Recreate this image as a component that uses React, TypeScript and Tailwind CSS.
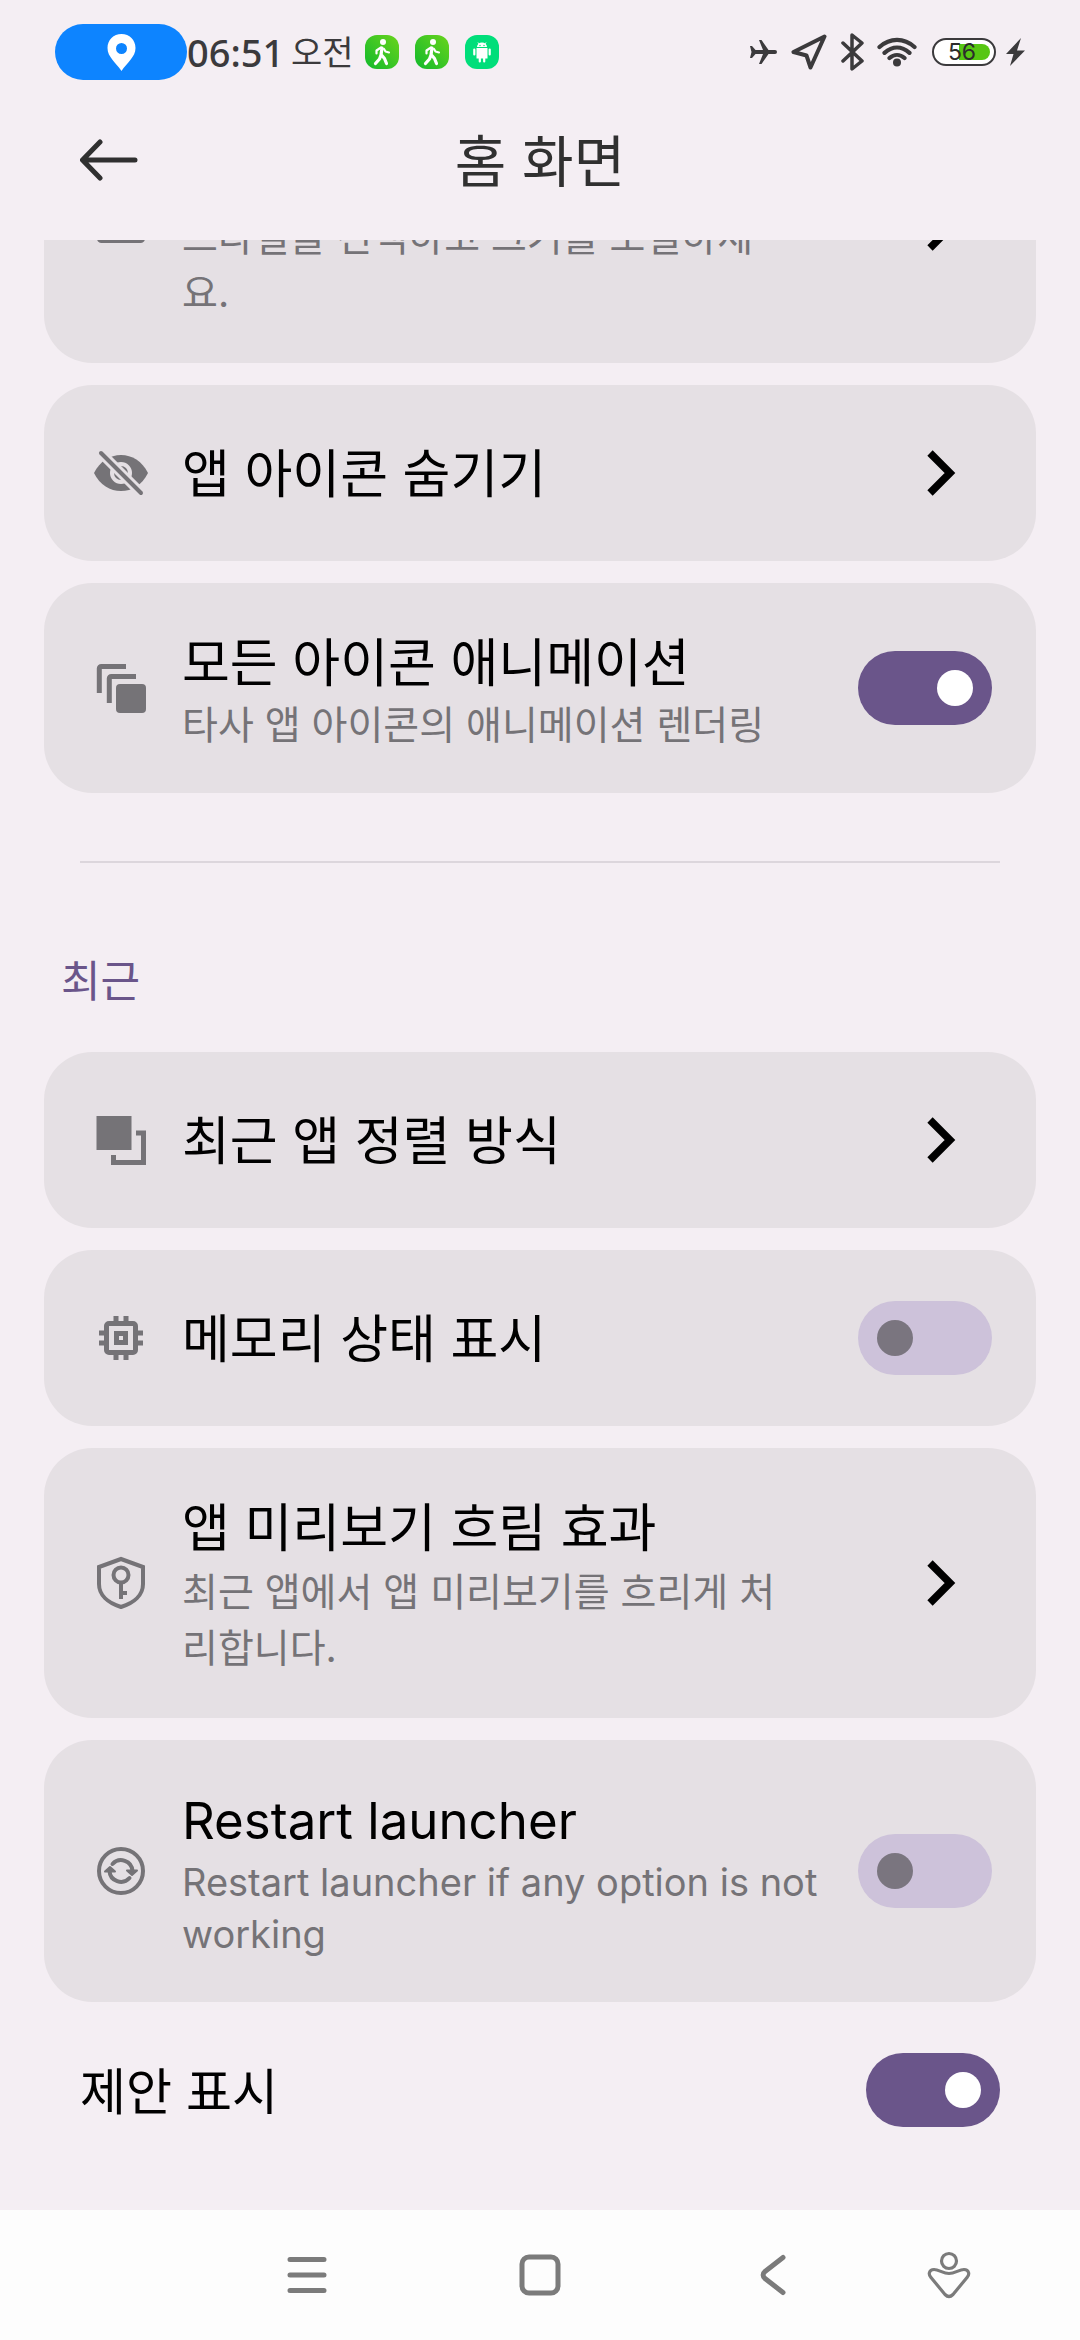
import { useId, useState } from "react";
import type { ReactNode } from "react";

const GRAY = "#757377";

function IconBox({ size, children }: { size: number; children: ReactNode }) {
  return (
    <svg width={size} height={size} viewBox="0 0 56 56" aria-hidden="true">
      {children}
    </svg>
  );
}

function GridIcon() {
  return (
    <IconBox size={56}>
      <rect x="6.5" y="15.5" width="43" height="25" rx="2" fill="none" stroke={GRAY} strokeWidth="5" />
    </IconBox>
  );
}

function EyeOffIcon() {
  return (
    <IconBox size={56}>
      <path d="M1 28C7 16 17 10 28 10s21 6 27 18c-6 12-16 18-27 18S7 40 1 28z" fill={GRAY} />
      <circle cx="28" cy="28" r="9" fill={GRAY} stroke="#e5e0e4" strokeWidth="4" />
      <path d="M4 4l48 48" stroke="#e5e0e4" strokeWidth="10" />
      <path d="M8 8l40 40" stroke={GRAY} strokeWidth="4" strokeLinecap="round" />
    </IconBox>
  );
}

function LayersIcon() {
  return (
    <IconBox size={56}>
      <path d="M6.300 33V8.500a2 2 0 0 1 2-2H33M16.300 43V18.500a2 2 0 0 1 2-2H43" fill="none" stroke={GRAY} strokeWidth="5" />
      <rect x="23" y="24" width="30" height="29" rx="4" fill={GRAY} />
    </IconBox>
  );
}

function RecentsIcon() {
  return (
    <IconBox size={56}>
      <path d="M3.500 4h35v34h-35z" fill={GRAY} />
      <path d="M43 21h7.500v29.500h-30V43" fill="none" stroke={GRAY} strokeWidth="5" />
    </IconBox>
  );
}

function ChipIcon() {
  return (
    <IconBox size={56}>
      <rect x="13.500" y="13.500" width="29" height="29" rx="2.500" fill="none" stroke={GRAY} strokeWidth="5" />
      <path d="M21 21h14v14H21zM26 26v4h4v-4z" fill={GRAY} fillRule="evenodd" />
      <path d="M23 6v6M33 6v6M23 44v6M33 44v6M6 23h6M6 33h6M44 23h6M44 33h6" stroke={GRAY} strokeWidth="5" />
    </IconBox>
  );
}

function ShieldIcon() {
  return (
    <IconBox size={56}>
      <path d="M28 4l22 8v17c0 11-9 19-22 23C15 48 6 40 6 29V12z" fill="none" stroke={GRAY} strokeWidth="4" />
      <circle cx="28" cy="20" r="7.500" fill="none" stroke={GRAY} strokeWidth="4" />
      <path d="M28 27v17M28 38h6" fill="none" stroke={GRAY} strokeWidth="4" />
    </IconBox>
  );
}

function RestartIcon() {
  return (
    <IconBox size={56}>
      <circle cx="28" cy="28" r="22" fill="none" stroke={GRAY} strokeWidth="4" />
      <path d="M19.500 21a11.500 11.500 0 0 1 20 7M36.500 35a11.500 11.500 0 0 1-20-7" fill="none" stroke={GRAY} strokeWidth="4" strokeLinecap="round" />
      <path d="M34 27.500h10l-5 4.500zM12 28.500h10l-5-4.500z" fill={GRAY} stroke={GRAY} strokeWidth="2" strokeLinejoin="round" />
    </IconBox>
  );
}

function Chevron() {
  return (
    <svg width="29" height="46" viewBox="0 0 29 46" className="mr-9" aria-hidden="true">
      <path d="M3 3l20 20L3 43" fill="none" stroke="#000" strokeWidth="7.500" />
    </svg>
  );
}

function Toggle({ id, initial }: { id: string; initial: boolean }) {
  const [on, setOn] = useState(initial);
  return (
    <span className="relative flex h-[74px] w-[134px] shrink-0">
      <input
        id={id}
        type="checkbox"
        role="switch"
        checked={on}
        onChange={() => setOn(!on)}
        className="peer h-full w-full appearance-none rounded-full bg-[#cdc2da] checked:bg-[#6a558a]"
      />
      <span className="pointer-events-none absolute top-[19px] left-[19px] size-9 rounded-full bg-[#7a757f] peer-checked:left-[79px] peer-checked:bg-white" />
    </span>
  );
}

type RowProps = {
  icon: ReactNode;
  title: string;
  text?: string;
  variant?: "compact" | "tall" | "latin";
};

const titleClass = {
  compact: "block text-[52px] leading-[70px] text-black",
  tall: "block text-[52px] leading-[70px] text-black",
  latin: "block text-[51px] leading-[70px] text-black",
};

const textClass = {
  compact: "block text-[39px] leading-[52px] text-[#757377]",
  tall: "block text-[39px] leading-[56px] text-[#757377]",
  latin: "block text-[38px] leading-[52px] text-[#757377]",
};

function RowBody({ icon, title, text, variant = "compact" }: RowProps) {
  return (
    <>
      <span className="flex w-[66px] shrink-0 justify-center">{icon}</span>
      <span className="ml-7 min-w-0 flex-1 pt-1 text-left">
        <span className={titleClass[variant]}>{title}</span>
        {text && <span className={textClass[variant]}>{text}</span>}
      </span>
    </>
  );
}

const card = "flex min-h-[176px] w-full items-center rounded-[48px] bg-[#e5e0e4] px-11 py-[42px]";

function LinkCard(props: RowProps) {
  return (
    <button type="button" className={card}>
      <RowBody {...props} />
      <span className="flex w-[204px] shrink-0 justify-end">
        <Chevron />
      </span>
    </button>
  );
}

function SwitchCard({ on, ...props }: RowProps & { on: boolean }) {
  const id = useId();
  return (
    <label htmlFor={id} className={card}>
      <RowBody {...props} />
      <Toggle id={id} initial={on} />
    </label>
  );
}

function WalkIcon() {
  const id = useId();
  return (
    <svg width="34" height="34" viewBox="0 0 34 34" aria-hidden="true">
      <defs>
        <linearGradient id={id} x1="0" y1="1" x2="1" y2="0">
          <stop offset="0" stopColor="#10b92c" />
          <stop offset="1" stopColor="#6ad41c" />
        </linearGradient>
      </defs>
      <rect width="34" height="34" rx="12" fill={`url(#${id})`} />
      <circle cx="18" cy="7" r="3" fill="#fff" />
      <path d="M16 12.500l-4.500 3v3" fill="none" stroke="#fff" strokeWidth="2.200" strokeLinecap="round" strokeLinejoin="round" />
      <path d="M19 14l1.500 2.500 3.500 1" fill="none" stroke="#fff" strokeWidth="2.200" strokeLinecap="round" strokeLinejoin="round" />
      <path d="M17 13l-1 7-1.500 4-4 4.500M16.500 20l3 3.500 2 5" fill="none" stroke="#fff" strokeWidth="3.200" strokeLinecap="round" strokeLinejoin="round" />
    </svg>
  );
}

function AndroidIcon() {
  return (
    <svg width="34" height="34" viewBox="0 0 34 34" aria-hidden="true">
      <rect width="34" height="34" rx="12" fill="#00de7a" />
      <path d="M12 12a5 4.500 0 0 1 10 0zM11.500 13h11v10.500h-11z" fill="#fff" />
      <path d="M9.300 14.500v5M24.700 14.500v5M14.800 23v3.500M19.200 23v3.500" stroke="#fff" strokeWidth="2.200" strokeLinecap="round" />
      <path d="M13 7.500l1.500 2M21 7.500l-1.500 2" stroke="#fff" strokeWidth="1" />
      <circle cx="15" cy="10.500" r="0.700" fill="#00de7a" />
      <circle cx="19" cy="10.500" r="0.700" fill="#00de7a" />
    </svg>
  );
}

function StatusBar() {
  return (
    <div className="flex h-[104px] shrink-0 items-center px-[55px] text-[#3b3a3c]">
      <span className="flex h-14 w-[132px] items-center justify-center rounded-full bg-[#0d84ff]">
        <svg width="29" height="37" viewBox="0 0 29 37" aria-hidden="true">
          <path d="M14.500 0C6.500 0 0.500 6 0.500 14c0 9 8 14 14 23 6-9 14-14 14-23 0-8-6-14-14-14zm0 9a5.500 5.500 0 1 1 0 11 5.500 5.500 0 0 1 0-11z" fill="#fff" fillRule="evenodd" />
        </svg>
      </span>
      <span className="w-[104px] font-['Noto_Sans',sans-serif] text-[38px] font-medium">06:51</span>
      <span className="w-[64px] text-[34px] whitespace-nowrap">오전</span>
      <span className="ml-[10px] flex items-center gap-4">
        <WalkIcon />
        <WalkIcon />
        <AndroidIcon />
      </span>
      <span className="ml-auto flex items-center">
        <svg width="27" height="26" viewBox="0 0 27 26" aria-hidden="true">
          <path d="M0 7h2l3.500 4h7.500L9 1h2.500l7 10H25a2 2 0 0 1 0 4h-6.500l-7 10H9l4-10H5.500L2 19H0l1.500-6z" fill="currentColor" />
        </svg>
        <svg width="36" height="36" viewBox="0 0 36 36" className="ml-[14px]" aria-hidden="true">
          <path d="M33.500 2.500L2.500 18l13 3.500L19.500 33.500z" fill="none" stroke="currentColor" strokeWidth="4" strokeLinejoin="round" />
        </svg>
        <svg width="24" height="38" viewBox="0 0 24 38" className="ml-[14px]" aria-hidden="true">
          <path d="M2 10l19 18-10 8V2l10 8L2 28" fill="none" stroke="currentColor" strokeWidth="3.500" strokeLinejoin="round" strokeLinecap="round" />
        </svg>
        <svg width="40" height="30" viewBox="0 0 40 30" className="ml-[12px]" aria-hidden="true">
          <path d="M2.500 10c10.500-9.500 24.500-9.500 35 0M7.500 15.800c8-7 17-7 25 0M12.500 21c4.500-4 10.500-4 15 0" fill="none" stroke="currentColor" strokeWidth="4.200" strokeLinecap="round" />
          <circle cx="20" cy="25.500" r="4" fill="currentColor" />
        </svg>
        <span className="ml-[15px] flex h-7 w-16 items-center rounded-full border-2 border-[#3b3a3c] bg-white p-1">
          <span className="relative flex h-full w-full items-center justify-center">
            <span className="absolute top-0 right-0 h-4 w-[31px] rounded-r-full bg-[#56c612]" />
            <span className="relative mr-1 text-[23px] leading-4 text-[#2c2c2c]">56</span>
          </span>
        </span>
        <svg width="19" height="28" viewBox="0 0 19 28" className="ml-[10px]" aria-hidden="true">
          <path d="M15 0L0 16h7.500L4 28l15-15.500h-8z" fill="currentColor" />
        </svg>
      </span>
    </div>
  );
}

const navButton = "flex h-full items-center justify-center";

function NavBar() {
  return (
    <nav className="grid h-[130px] shrink-0 grid-cols-[190px_233px_233px_233px_120px_71px] justify-center bg-[#fdfdfd] text-[#7b7b7b]">
      <span />
      <button type="button" aria-label="최근 앱" className={navButton}>
        <svg width="40" height="40" viewBox="0 0 40 40" aria-hidden="true">
          <path d="M3 4.500h34M3 20h34M3 35.500h34" stroke="currentColor" strokeWidth="5" strokeLinecap="round" />
        </svg>
      </button>
      <button type="button" aria-label="홈" className={navButton}>
        <svg width="42" height="42" viewBox="0 0 42 42" aria-hidden="true">
          <rect x="3" y="3" width="36" height="36" rx="7" fill="none" stroke="currentColor" strokeWidth="5" />
        </svg>
      </button>
      <button type="button" aria-label="뒤로" className={navButton}>
        <svg width="26" height="42" viewBox="0 0 26 42" aria-hidden="true">
          <path d="M23 3.500L5 17.500c-2.500 2-2.500 5 0 7L23 38.500" fill="none" stroke="currentColor" strokeWidth="5" strokeLinecap="round" />
        </svg>
      </button>
      <button type="button" aria-label="접근성" className={navButton}>
        <svg width="44" height="48" viewBox="0 0 44 48" aria-hidden="true">
          <circle cx="22" cy="10" r="7.500" fill="none" stroke="currentColor" strokeWidth="3.200" />
          <path d="M7 18.500c5 0 9 4 15 4s10-4 15-4c5 0 6 5 3 8L26 43.500c-2.500 2.500-5.500 2.500-8 0L4 26.500c-3-3-2-8 3-8z" fill="none" stroke="currentColor" strokeWidth="3.200" strokeLinejoin="round" />
        </svg>
      </button>
      <span />
    </nav>
  );
}

export default function App() {
  const suggestId = useId();
  return (
    <div className="flex h-screen flex-col bg-[#f4eef3] font-['Inter','Noto_Sans_CJK_KR',sans-serif]">
      <StatusBar />
      <header className="grid h-[136px] shrink-0 grid-cols-[1fr_auto_1fr] items-start px-20 pt-[14px] text-[#303030]">
        <button type="button" aria-label="뒤로" className="flex h-[84px] w-[58px] items-center">
          <svg width="58" height="42" viewBox="0 0 58 42" aria-hidden="true">
            <path d="M20 3L2.500 21 20 39M3 21h52" fill="none" stroke="currentColor" strokeWidth="5" strokeLinecap="round" strokeLinejoin="round" />
          </svg>
        </button>
        <h1 className="text-[56px] leading-[88px] font-normal">홈 화면</h1>
      </header>
      <main className="min-h-0 flex-1 overflow-hidden px-11">
        <section className="-mt-[147px] flex flex-col gap-[22px]">
          <LinkCard icon={<GridIcon />} title="아이콘" text="스타일을 선택하고 크기를 조절하세요." variant="tall" />
          <LinkCard icon={<EyeOffIcon />} title="앱 아이콘 숨기기" />
          <SwitchCard icon={<LayersIcon />} title="모든 아이콘 애니메이션" text="타사 앱 아이콘의 애니메이션 렌더링" on />
        </section>
        <hr className="mx-9 mt-[68px] border-t-2 border-[#dcd6dc]" />
        <section>
          <h2 className="mt-[86px] mb-[39px] ml-[17px] text-[43px] leading-[64px] font-normal text-[#6a558a]">최근</h2>
          <div className="flex flex-col gap-[22px]">
            <LinkCard icon={<RecentsIcon />} title="최근 앱 정렬 방식" />
            <SwitchCard icon={<ChipIcon />} title="메모리 상태 표시" on={false} />
            <LinkCard icon={<ShieldIcon />} title="앱 미리보기 흐림 효과" text="최근 앱에서 앱 미리보기를 흐리게 처리합니다." variant="tall" />
            <SwitchCard icon={<RestartIcon />} title="Restart launcher" text="Restart launcher if any option is not working" variant="latin" on={false} />
          </div>
        </section>
        <label htmlFor={suggestId} className="flex h-[176px] items-center justify-between px-9">
          <span className="pt-1 text-[50px] leading-[70px] text-black">제안 표시</span>
          <Toggle id={suggestId} initial={true} />
        </label>
      </main>
      <NavBar />
    </div>
  );
}
